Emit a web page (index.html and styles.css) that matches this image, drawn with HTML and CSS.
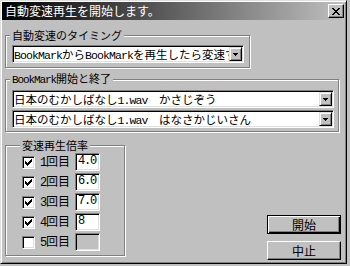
FILE: index.html
```html
<!DOCTYPE html>
<html lang="ja">
<head>
    <meta charset="UTF-8">
    <title>自動変速再生を開始します。</title>
    <link rel="stylesheet" href="styles.css">
</head>
<body>
    <div class="window">
        <div class="titlebar">
            <span class="title">自動変速再生を開始します。</span>
            <div class="close">
                <svg width="8" height="7" viewBox="0 0 8 7" shape-rendering="crispEdges"><path d="M0 0h2v1H0zM6 0h2v1H6zM1 1h2v1H1zM5 1h2v1H5zM2 2h4v1H2zM3 3h2v1H3zM2 4h4v1H2zM1 5h2v1H1zM5 5h2v1H5zM0 6h2v1H0zM6 6h2v1H6z"/></svg>
            </div>
        </div>

        <div class="client">
            <fieldset class="group group-timing">
                <legend>自動変速のタイミング</legend>
                <div class="combo">
                    <span class="combo-text"><span class="hw">BookMark</span>から<span class="hw">BookMark</span>を再生したら変速する</span>
                    <span class="combo-btn"><svg width="5" height="3" viewBox="0 0 5 3" shape-rendering="crispEdges"><path d="M0 0h5v1H0zM1 1h3v1H1zM2 2h1v1H2z"/></svg></span>
                </div>
            </fieldset>

            <fieldset class="group group-bookmark">
                <legend><span class="hw">BookMark</span>開始と終了</legend>
                <div class="combo">
                    <span class="combo-text">日本のむかしばなし<span class="hw">1.wav</span>　かさじぞう</span>
                    <span class="combo-btn"><svg width="5" height="3" viewBox="0 0 5 3" shape-rendering="crispEdges"><path d="M0 0h5v1H0zM1 1h3v1H1zM2 2h1v1H2z"/></svg></span>
                </div>
                <div class="combo combo-next">
                    <span class="combo-text">日本のむかしばなし<span class="hw">1.wav</span>　はなさかじいさん</span>
                    <span class="combo-btn"><svg width="5" height="3" viewBox="0 0 5 3" shape-rendering="crispEdges"><path d="M0 0h5v1H0zM1 1h3v1H1zM2 2h1v1H2z"/></svg></span>
                </div>
            </fieldset>

            <div class="bottom">
                <fieldset class="group group-rate">
                    <legend>変速再生倍率</legend>
                    <div class="rate-row">
                        <span class="check"><svg width="7" height="7" viewBox="0 0 7 7" shape-rendering="crispEdges"><path d="M6 0h1v1H6zM5 1h2v1H5zM0 2h1v1H0zM4 2h3v1H4zM0 3h2v1H0zM3 3h3v1H3zM0 4h5v1H0zM1 5h3v1H1zM2 6h1v1H2z"/></svg></span>
                        <span class="rate-label"><span class="hw">1</span>回目</span>
                        <span class="field hw">4.0</span>
                    </div>
                    <div class="rate-row">
                        <span class="check"><svg width="7" height="7" viewBox="0 0 7 7" shape-rendering="crispEdges"><path d="M6 0h1v1H6zM5 1h2v1H5zM0 2h1v1H0zM4 2h3v1H4zM0 3h2v1H0zM3 3h3v1H3zM0 4h5v1H0zM1 5h3v1H1zM2 6h1v1H2z"/></svg></span>
                        <span class="rate-label"><span class="hw">2</span>回目</span>
                        <span class="field hw">6.0</span>
                    </div>
                    <div class="rate-row">
                        <span class="check"><svg width="7" height="7" viewBox="0 0 7 7" shape-rendering="crispEdges"><path d="M6 0h1v1H6zM5 1h2v1H5zM0 2h1v1H0zM4 2h3v1H4zM0 3h2v1H0zM3 3h3v1H3zM0 4h5v1H0zM1 5h3v1H1zM2 6h1v1H2z"/></svg></span>
                        <span class="rate-label"><span class="hw">3</span>回目</span>
                        <span class="field hw">7.0</span>
                    </div>
                    <div class="rate-row">
                        <span class="check"><svg width="7" height="7" viewBox="0 0 7 7" shape-rendering="crispEdges"><path d="M6 0h1v1H6zM5 1h2v1H5zM0 2h1v1H0zM4 2h3v1H4zM0 3h2v1H0zM3 3h3v1H3zM0 4h5v1H0zM1 5h3v1H1zM2 6h1v1H2z"/></svg></span>
                        <span class="rate-label"><span class="hw">4</span>回目</span>
                        <span class="field hw">8</span>
                    </div>
                    <div class="rate-row">
                        <span class="check"></span>
                        <span class="rate-label"><span class="hw">5</span>回目</span>
                        <span class="field field-off"></span>
                    </div>
                </fieldset>

                <div class="buttons">
                    <div class="btn btn-default">開始</div>
                    <div class="btn">中止</div>
                </div>
            </div>
        </div>
    </div>
</body>
</html>
```

FILE: styles.css
```css
body {
    margin: 0;
    background: #c0c0c0;
    font-family: "Noto Sans CJK JP", sans-serif;
    font-size: 12px;
    color: #000;
}
.hw {
    font-family: "Liberation Mono", monospace;
    letter-spacing: -1.2px;
}
.window {
    width: 347px;
    height: 264px;
    box-sizing: border-box;
    padding: 1px;
    border: 1px solid;
    border-color: #dfdfdf #000 #000 #dfdfdf;
    box-shadow: inset 1px 1px #fff, inset -1px -1px #808080;
    display: flex;
    flex-direction: column;
}
.titlebar {
    height: 18px;
    flex: none;
    background: linear-gradient(to right, #000, #c0c0c0);
    display: flex;
    align-items: center;
    justify-content: space-between;
    padding: 0 1px 0 3px;
}
.title {
    color: #fff;
    line-height: 18px;
}
.close {
    width: 16px;
    height: 14px;
    box-sizing: border-box;
    background: #c0c0c0;
    border: 1px solid;
    border-color: #fff #000 #000 #fff;
    box-shadow: inset -1px -1px #808080;
    display: flex;
    align-items: center;
    justify-content: center;
}
.client {
    flex: 1;
    padding: 8px 4px 2px 3px;
    display: flex;
    flex-direction: column;
}
.group {
    margin: 0;
    min-width: 0;
    box-sizing: border-box;
    border: 1px solid #808080;
    box-shadow: inset 1px 1px #fff, 1px 1px #fff;
}
.group legend {
    font-size: 11px;
    line-height: 14px;
    padding: 0 2px;
    margin-left: -2px;
    background: #c0c0c0;
}
.group legend .hw {
    letter-spacing: -1.1px;
}
.group-timing {
    width: 245px;
    padding: 3px 5px 4px 6px;
}
.group-bookmark {
    width: 334px;
    margin-top: 3px;
    padding: 3px 4px 3px 6px;
}
.combo {
    height: 18px;
    box-sizing: border-box;
    padding: 1px;
    background: #fff;
    border: 1px solid;
    border-color: #808080 #fff #fff #808080;
    box-shadow: inset 1px 1px #000, inset -1px -1px #dfdfdf;
    display: flex;
}
.combo-next {
    margin-top: 2px;
}
.combo-text {
    flex: 1;
    overflow: hidden;
    white-space: nowrap;
    font-size: 11.5px;
    line-height: 14px;
}
.combo-text .hw {
    letter-spacing: -0.9px;
}
.combo-btn {
    width: 13px;
    box-sizing: border-box;
    background: #c0c0c0;
    border: 1px solid;
    border-color: #dfdfdf #000 #000 #dfdfdf;
    box-shadow: inset 1px 1px #fff, inset -1px -1px #808080;
    display: flex;
    align-items: center;
    justify-content: center;
}
.bottom {
    flex: 1;
    margin-top: 6px;
    display: flex;
    align-items: flex-start;
}
.group-rate {
    width: 120px;
    padding: 1px 0 4px 16px;
}
.rate-row {
    height: 18px;
    display: flex;
    align-items: center;
}
.rate-row + .rate-row {
    margin-top: 2px;
}
.check {
    width: 13px;
    height: 13px;
    box-sizing: border-box;
    margin-right: 5px;
    background: #fff;
    border: 1px solid;
    border-color: #808080 #fff #fff #808080;
    box-shadow: inset 1px 1px #000, inset -1px -1px #dfdfdf;
    display: flex;
    align-items: center;
    justify-content: center;
}
.rate-label {
    width: 30px;
    margin-right: 5px;
    line-height: 18px;
    white-space: nowrap;
}
.field {
    width: 25px;
    height: 18px;
    box-sizing: border-box;
    padding-left: 2px;
    line-height: 15px;
    background: #fff;
    border: 1px solid;
    border-color: #808080 #fff #fff #808080;
    box-shadow: inset 1px 1px #000, inset -1px -1px #dfdfdf;
}
.field-off {
    background: #c0c0c0;
}
.buttons {
    margin-left: auto;
    align-self: flex-end;
    display: flex;
    flex-direction: column;
    gap: 7px;
}
.btn {
    width: 74px;
    height: 19px;
    box-sizing: border-box;
    text-align: center;
    line-height: 17px;
    background: #c0c0c0;
    border: 1px solid;
    border-color: #fff #000 #000 #fff;
    box-shadow: inset -1px -1px #808080;
}
.btn-default {
    border-color: #000;
    box-shadow: inset 1px 1px #fff, inset -1px -1px #000, inset -2px -2px #808080;
}
```
